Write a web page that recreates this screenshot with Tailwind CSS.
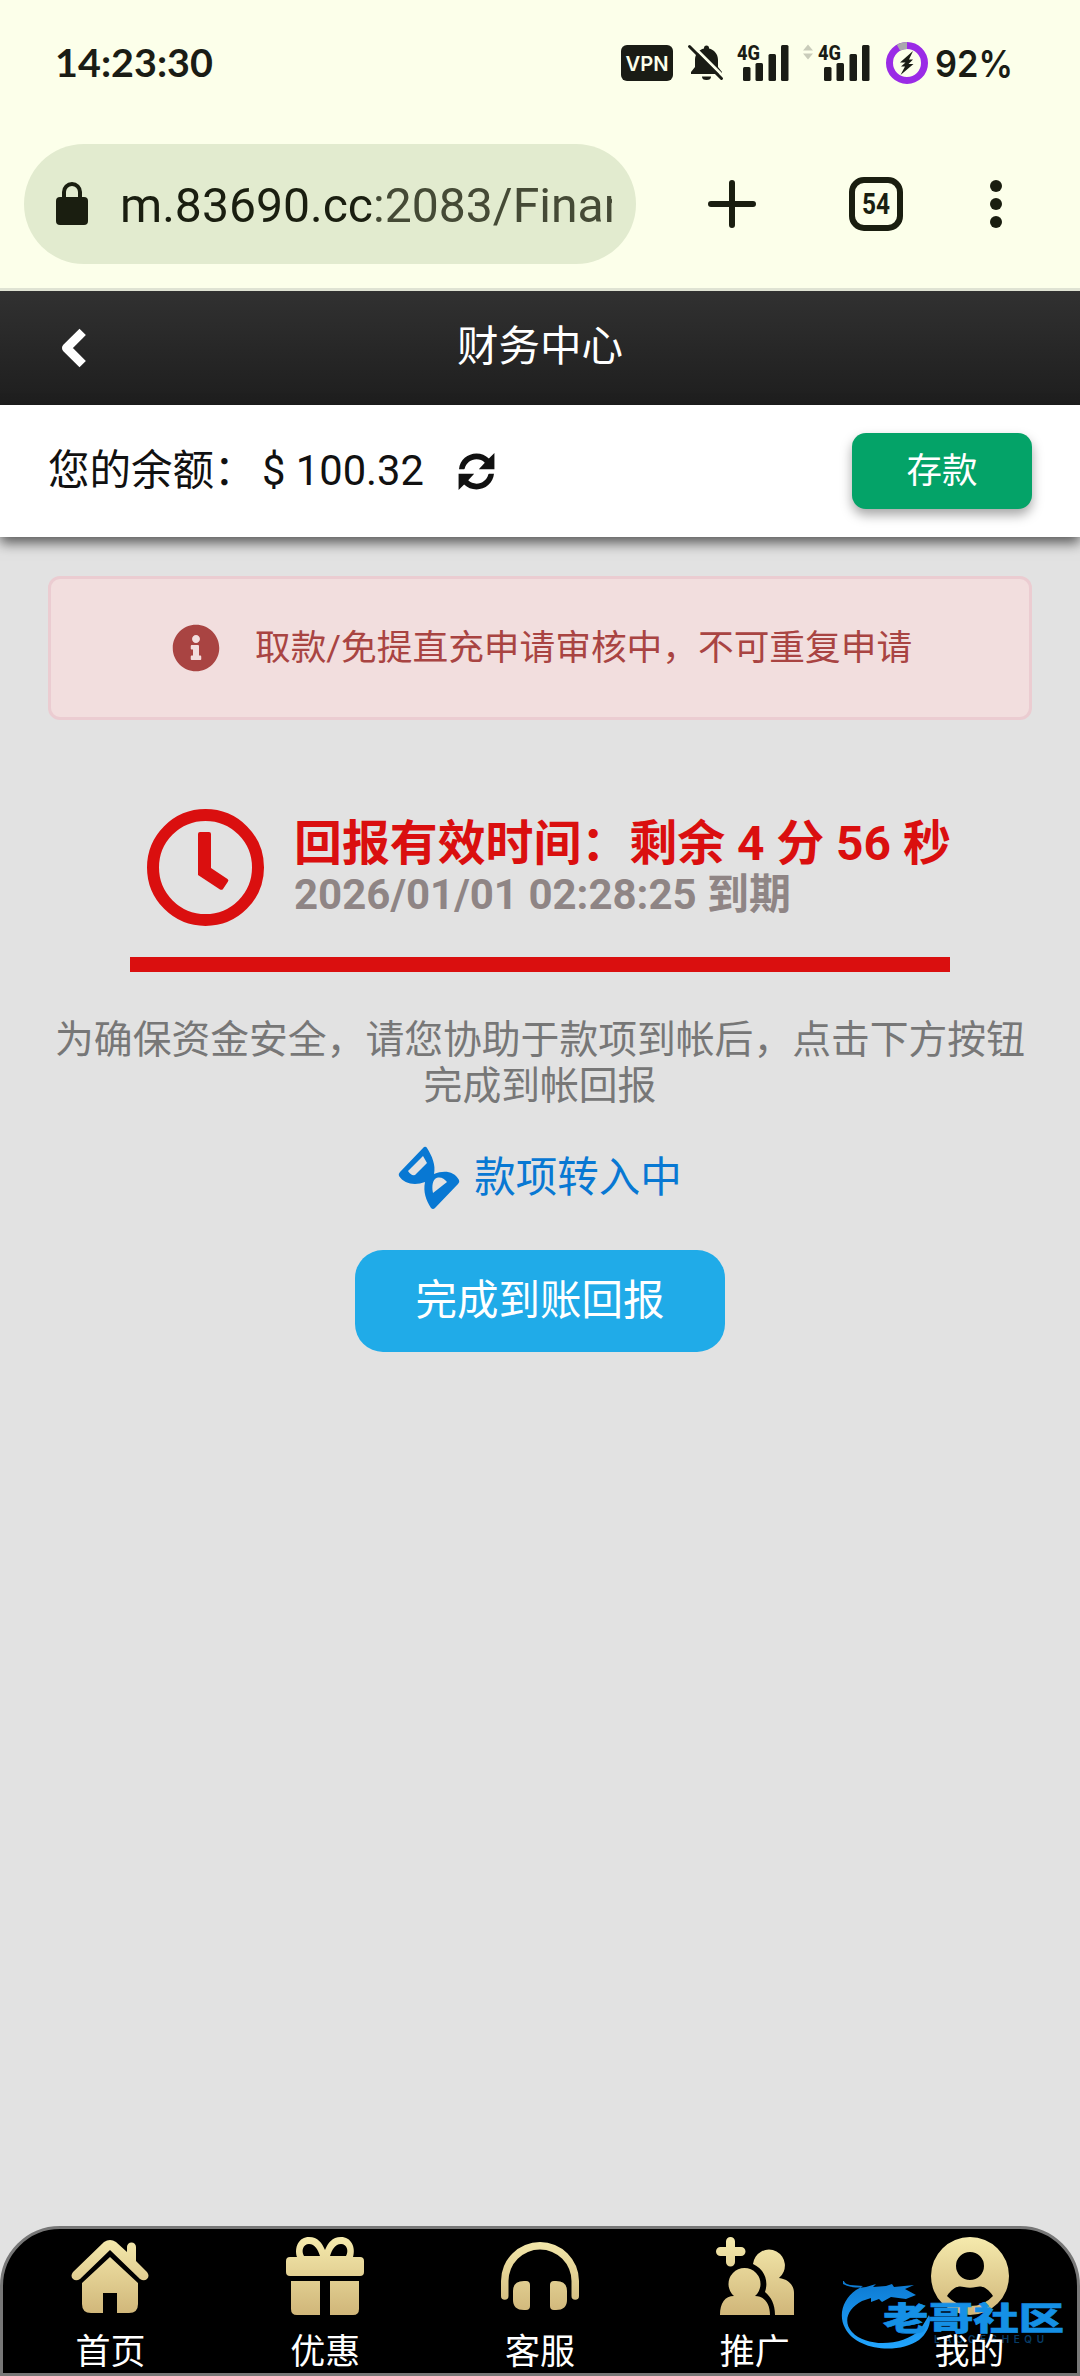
<!DOCTYPE html>
<html lang="zh-CN">
<head>
<meta charset="utf-8">
<title>财务中心</title>
<script src="https://cdn.jsdelivr.net/npm/@tailwindcss/browser@4"></script>
</head>
<body class="w-[1080px] h-[2376px] flex flex-col overflow-hidden bg-[#e2e2e2] font-[Roboto,'Noto_Sans_CJK_SC',sans-serif] whitespace-nowrap">

<!-- Status bar -->
<div class="h-[126px] shrink-0 bg-[#fcffea] flex items-center justify-between pl-[55px] pr-[65px] text-[#1a1c15]">
  <svg width="160" height="50" viewBox="0 0 160 50"><text x="0" y="39" font-family="Lato, sans-serif" font-weight="700" font-size="39" textLength="158" lengthAdjust="spacingAndGlyphs" fill="#1a1c15">14:23:30</text></svg>
  <svg width="395" height="50" viewBox="620 38 395 50" fill="#1a1c15">
    <rect x="621" y="45" width="52" height="36" rx="6"/>
    <text x="647" y="70.500" text-anchor="middle" font-family="Inter, sans-serif" font-weight="600" font-size="20.500" textLength="43" lengthAdjust="spacingAndGlyphs" fill="#fcffea">VPN</text>
    <path d="M691 74v-2l4-5v-7c0-6 4-10.500 9-11.500v-.5a2.500 2.500 0 0 1 5 0v.5c5 1 9 5.500 9 11.500v7l4 5v2z"/>
    <path d="M702 76.500h9a4.500 3.500 0 0 1-9 0z"/>
    <path d="M691 44l34 34" stroke="#fcffea" stroke-width="3"/>
    <path d="M689.500 46.500l32 32" stroke="#1a1c15" stroke-width="3" stroke-linecap="round"/>
    <g id="signal">
      <text x="737" y="60" font-family="Roboto, sans-serif" font-weight="800" font-size="21" textLength="23" lengthAdjust="spacingAndGlyphs">4G</text>
      <rect x="743" y="67" width="7.500" height="14" rx="1.500"/>
      <rect x="755.500" y="63" width="7.500" height="18" rx="1.500"/>
      <rect x="768.500" y="54" width="7.500" height="27" rx="1.500"/>
      <rect x="781" y="45" width="7.500" height="36" rx="1.500"/>
    </g>
    <use href="#signal" x="81"/>
    <path d="M803 50.500l5-6 5 6zM803 53.500l5 6 5-6z" fill="#c9ccba"/>
    <circle cx="907" cy="63" r="17.500" fill="none" stroke="#9a2be6" stroke-width="7"/>
    <path d="M898.500 47.700A17.500 17.500 0 0 1 907 45.500" fill="none" stroke="#aaa8ad" stroke-width="7"/>
    <path d="M913 51l-13 11.500h5.500l-4.500 4h4l-4.500 8.500 13-11h-5l4.500-4.500h-4z"/>
    <text x="935" y="77" font-family="Inter, sans-serif" font-weight="600" font-size="37" textLength="78" lengthAdjust="spacingAndGlyphs">92%</text>
  </svg>
</div>

<!-- Browser toolbar -->
<div class="h-[165px] shrink-0 bg-[#fcffea] border-b-3 border-[#dfe3d3] flex items-start pt-[18px] pl-6">
  <div class="w-[612px] h-[120px] rounded-full bg-[#e2ebcf] flex items-center pl-8 pr-6">
    <svg class="shrink-0" width="32" height="44" viewBox="0 0 32 44"><rect y="15" width="32" height="28" rx="4" fill="#1a1e10"/><path d="M8 16V10a8 8 0 0 1 16 0v6" fill="none" stroke="#1a1e10" stroke-width="4"/></svg>
    <div class="ml-8 w-[492px] overflow-hidden text-[48px] leading-[64px] text-[#1a1e10]"><svg width="492" height="64"><text x="0" y="49.500" font-size="48.100" fill="#1a1e10">m.83690.cc<tspan fill="#454a36">:2083/Finan</tspan></text></svg></div>
  </div>
  <svg class="ml-[72px] mt-9" width="48" height="48" viewBox="0 0 48 48" stroke="#1a1e10" stroke-width="6" stroke-linecap="round"><path d="M24 3v42M3 24h42"/></svg>
  <div class="ml-[93px] mt-[33px] size-[54px] rounded-[15px] border-6 border-[#1a1e10] flex items-center justify-center"><svg width="30" height="30"><text x="1" y="25" font-size="29" font-weight="700" textLength="28" lengthAdjust="spacingAndGlyphs" fill="#1a1e10">54</text></svg></div>
  <div class="ml-[87px] mt-9 flex flex-col gap-1.5">
    <div class="size-3 rounded-full bg-[#1a1e10]"></div>
    <div class="size-3 rounded-full bg-[#1a1e10]"></div>
    <div class="size-3 rounded-full bg-[#1a1e10]"></div>
  </div>
</div>

<!-- Page header -->
<header class="h-[114px] shrink-0 bg-linear-to-b from-[#313131] to-[#1e1e1e] grid grid-cols-3 items-center px-[60px]">
  <svg width="27" height="42" viewBox="0 0 27 42" fill="none" stroke="#fff" stroke-width="9" stroke-linecap="square" stroke-linejoin="round"><path d="M19.500 8L6.500 21l13 13"/></svg>
  <h1 class="text-center text-[41.500px] leading-[60px] text-white -mt-0.5">财务中心</h1>
</header>

<!-- Balance -->
<section class="h-[132px] shrink-0 bg-white shadow-[0_6px_12px_rgba(0,0,0,0.6)] flex items-center px-12">
  <div class="text-[41.500px] leading-[60px] text-[#111] w-[214px]">您的余额：</div>
  <div class="text-[41.700px] leading-[60px] text-[#111]">$ 100.32</div>
  <svg class="ml-[34px]" width="37" height="37" viewBox="0 0 512 512" fill="#111"><path d="M370.700 133.300C339.500 104 298.900 88 255.800 88c-77.500.1-144.300 53.200-162.800 126.900-1.300 5.400-6.100 9.100-11.700 9.100H14C25 94.900 134.800 8 256 8c66.400 0 126.800 26.100 171.300 68.700L504 0V224H288zM8 288H224L141.300 378.800c31.300 29.300 71.800 45.300 114.900 45.300 77.400-.1 144.300-53.100 162.800-126.900 1.300-5.400 6.100-9.100 11.700-9.100H498C487 417.100 377.200 504 256 504c-66.400 0-126.800-26.100-171.300-68.700L8 512z"/></svg>
  <button class="ml-auto w-[180px] h-[76px] rounded-[14px] bg-[#04a368] text-white text-[35.500px] leading-[76px] shadow-[0_6px_12px_rgba(0,0,0,0.35)]">存款</button>
</section>

<main class="flex-1 flex flex-col items-center">
  <!-- Notice -->
  <div class="mt-[39px] w-[984px] h-36 rounded-xl border-3 border-[#ebccd1] bg-[#f2dede] flex items-center pl-[121px] text-[#a94442]">
    <svg width="48" height="48" viewBox="0 0 512 512" fill="#a94442"><path d="M256 8C119 8 8 119.100 8 256c0 137 111 248 248 248s248-111 248-248C504 119.100 393 8 256 8zm0 110c23.200 0 42 18.800 42 42s-18.800 42-42 42-42-18.800-42-42 18.800-42 42-42zm56 254c0 6.600-5.400 12-12 12h-88c-6.600 0-12-5.400-12-12v-24c0-6.600 5.400-12 12-12h12v-64h-12c-6.600 0-12-5.400-12-12v-24c0-6.600 5.400-12 12-12h64c6.600 0 12 5.400 12 12v100h12c6.600 0 12 5.400 12 12z"/></svg>
    <p class="ml-[35px] text-[35.700px] leading-[54px]">取款/免提直充申请审核中，不可重复申请</p>
  </div>

  <!-- Countdown -->
  <div class="mt-[84px] w-[820px] h-[168px] border-b-15 border-[#da0f0f] flex">
    <svg class="ml-[17px] mt-[5px] shrink-0" width="117" height="117" viewBox="0 0 117 117"><circle cx="58.500" cy="58.500" r="52.500" fill="none" stroke="#da0f0f" stroke-width="12"/><path d="M51 25a2 2 0 0 1 2-2h9a2 2 0 0 1 2 2v34l16.500 11q1.500 1 .5 2.500l-5 7.500q-1.200 1.500-3 .4L51 66z" fill="#da0f0f"/></svg>
    <div class="ml-[30px] mt-3 font-bold">
      <div class="text-[47.900px] leading-[56px] text-[#da0f0f]">回报有效时间：剩余 4 分 56 秒</div>
      <div class="text-[42px] leading-[46px] text-[#8f8585]">2026/01/01 02:28:25 到期</div>
    </div>
  </div>

  <p class="mt-[45px] text-center text-[38.800px] leading-[46px] text-[#777]">为确保资金安全，请您协助于款项到帐后，点击下方按钮<br>完成到帐回报</p>

  <div class="mt-[37px] h-[64px] flex items-center text-[#0878d3]">
    <svg width="62" height="64" viewBox="0 0 62 64" fill="#0878d3"><path fill-rule="evenodd" d="M26 1q2-1 3 1c5 8 9 17 7 26 10-4 20-3 25 6q1 2-1 4L37 62q-2 2-4 0c-5-8-8-16-6-26-10 4-21 2-26-6q-1-2 1-4zM25 10L10 25q3 5 7 4L29 17zM35 47l14-11c-3-4-8-6-12-3-3 3-3 9-2 14z"/></svg>
    <span class="ml-3.5 text-[41.500px] leading-[60px]">款项转入中</span>
  </div>

  <button class="mt-10 w-[370px] h-[102px] rounded-[28px] bg-[#20abe8] text-white text-[41.500px] leading-[102px]">完成到账回报</button>
</main>

<!-- Bottom navigation -->
<nav class="relative h-[150px] shrink-0 rounded-t-[60px] border-3 border-[#777] bg-black grid grid-cols-5 text-white text-[35px] leading-[44px] text-center">
  <svg class="absolute size-0"><defs><linearGradient id="gold" gradientUnits="userSpaceOnUse" x1="0" y1="0" x2="0" y2="78"><stop offset="0" stop-color="#f5eaad"/><stop offset="1" stop-color="#d0b679"/></linearGradient></defs></svg>
  <a class="flex flex-col items-center pt-2">
    <svg width="78" height="78" viewBox="0 0 78 78" fill="url(#gold)"><path d="M33 5q6-4 12 0l11 10V10a4.500 4.500 0 0 1 9 0v14l11 11q3 4 0 7-3 2.500-7 0L39 13 9 42q-4 2.500-7 0-3-3 0-7z"/><path d="M39 20l28 26v21q0 9-9 9H46V56H32v20H20q-9 0-9-9V46z"/></svg>
    <span class="mt-4">首页</span>
  </a>
  <a class="flex flex-col items-center pt-2">
    <svg width="78" height="78" viewBox="0 0 78 78" fill="url(#gold)"><path fill-rule="evenodd" d="M4 20h7C8 10 13 0 23 0c9 0 13 6 16 13C42 6 46 0 55 0c10 0 15 10 12 20h7q4 0 4 4v11q0 4-4 4H4q-4 0-4-4V24q0-4 4-4zM18 19h16c-2-6-5-12-11-12-6 0-8 7-5 12zm26 0h16c3-5 1-12-5-12S46 13 44 19z"/><path d="M5 44h29v34H11q-6 0-6-6zM44 44h29v28q0 6-6 6H44z"/></svg>
    <span class="mt-4">优惠</span>
  </a>
  <a class="flex flex-col items-center pt-2">
    <svg width="78" height="78" viewBox="0 0 78 78" fill="url(#gold)"><path d="M0 59V44a39 39 0 0 1 78 0v15a3.700 3.700 0 0 1-7.500 0V44a31.500 31.500 0 0 0-63 0v15A3.700 3.700 0 0 1 0 59z"/><path d="M23 44h2q4 0 4 4v21q0 4-4 4h-2q-11 0-11-10v-9q0-10 11-10zM55 44h-2q-4 0-4 4v21q0 4 4 4h2q11 0 11-10v-9q0-10-11-10z"/></svg>
    <span class="mt-4">客服</span>
  </a>
  <a class="flex flex-col items-center pt-2">
    <svg width="78" height="78" viewBox="0 0 78 78" fill="url(#gold)"><path d="M10 10V4.500a4.500 4.500 0 0 1 9 0V10h6a4.500 4.500 0 0 1 0 9h-6v6a4.500 4.500 0 0 1-9 0v-6H4.500a4.500 4.500 0 0 1 0-9z"/><path d="M37 27a16 16 0 1 1 26 14c9 1 15 7 15 15v22H59c0-11-4-18-10-23 4-12-1-23-12-28z"/><path d="M18 59a16 16 0 1 1 21 0c9 0 15 7 15 19H4c0-12 5-19 14-19z"/></svg>
    <span class="mt-4">推广</span>
  </a>
  <a class="relative flex flex-col items-center pt-2">
    <svg width="78" height="78" viewBox="0 0 78 78" fill="url(#gold)"><path fill-rule="evenodd" d="M39 0a39 39 0 1 1 0 78 39 39 0 0 1 0-78zm0 15a14 14 0 1 0 0 28 14 14 0 0 0 0-28zM16 59q9 10 23 10t23-10c-5-8-11-11-17-9-4 1-8 1-12 0-6-2-12 1-17 9z"/></svg>
    <!-- Community logo overlay -->
    <svg class="absolute -left-[21px] top-[52px]" width="226" height="74" viewBox="840 2281 226 74">
      <defs><linearGradient id="sky" x1="0" y1="0" x2="0" y2="1"><stop offset="0" stop-color="#0c78d0"/><stop offset="1" stop-color="#22a6ff"/></linearGradient></defs>
      <path fill="url(#sky)" d="M842 2284c8 4 15 4 23 3l10-3-3 3 13-1 6-2 2 3 20-2-9 4 11 6-10 4-15-2-9 5-3-3-8 3v-4l-9 3c-15 8-19 21-10 31 15 16 51 14 68-2l9-15c3 6-1 18-10 25-22 15-63 10-74-12-7-13-2-29 11-38l7-4-13-1c-5-1-6-3-7-6z"/>
      <text x="882" y="2330" font-family="'Noto Sans CJK SC', sans-serif" font-weight="900" font-size="32" textLength="181" lengthAdjust="spacingAndGlyphs" fill="#1590e6" stroke="#1590e6" stroke-width=".6">老哥社区</text>
      <text x="933" y="2343" font-family="Inter, sans-serif" font-weight="600" font-size="10" textLength="110" fill="#073c66">LAOGESHEQU</text>
    </svg>
    <span class="relative mt-4">我的</span>
  </a>
</nav>
</body>
</html>
